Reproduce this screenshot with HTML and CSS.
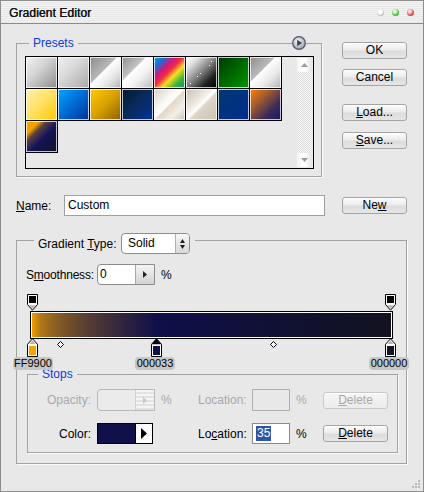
FILE: index.html
```html
<!DOCTYPE html>
<html>
<head>
<meta charset="utf-8">
<title>Gradient Editor</title>
<link rel="stylesheet" href="styles.css">
</head>
<body>
<div class="window">
  <div class="titlebar">
    <span class="title">Gradient Editor</span>
    <span class="tb-btns"><i class="dot dot-grey"></i><i class="dot dot-green"></i><i class="dot dot-red"></i></span>
  </div>
  <div class="content">
    <div class="top">
      <div class="group presets">
        <div class="group-head">
          <span class="legend">Presets</span>
          <span class="menu-btn">
            <svg width="14" height="14" viewBox="0 0 14 14">
              <defs><radialGradient id="mb" cx="40%" cy="35%" r="70%"><stop offset="0" stop-color="#f2f4f8"/><stop offset="1" stop-color="#9aa0ac"/></radialGradient></defs>
              <circle cx="7" cy="7" r="6.3" fill="url(#mb)" stroke="#4c5466" stroke-width="1.2"/>
              <path d="M5.2 3.8 10 7 5.2 10.2Z" fill="#3a4050"/>
            </svg>
          </span>
        </div>
        <div class="preset-box">
          <div class="swatches">
            <div class="sw sw1"></div><div class="sw sw2"></div><div class="sw sw3"></div><div class="sw sw4"></div>
            <div class="sw sw5"></div><div class="sw sw6"><svg width="31" height="31" viewBox="0 0 31 31"><rect x="25" y="4" width="1" height="1" fill="#fff"/><rect x="23" y="8" width="1" height="1" fill="#fff"/><rect x="14" y="16" width="1" height="1" fill="#fff"/><rect x="11" y="19" width="1" height="1" fill="#fff"/><rect x="4" y="26" width="1" height="1" fill="#fff"/></svg></div><div class="sw sw7"></div><div class="sw sw8"></div>
            <div class="sw sw9"></div><div class="sw sw10"></div><div class="sw sw11"></div><div class="sw sw12"></div>
            <div class="sw sw13"></div><div class="sw sw14"></div><div class="sw sw15"></div><div class="sw sw16"></div>
            <div class="sw sw17"></div>
          </div>
          <div class="scrollbar">
            <div class="sb-btn"><svg width="7" height="4" viewBox="0 0 7 4"><path d="M3.5 0 7 4H0Z" fill="#9a9a9a"/></svg></div>
            <div class="sb-track"></div>
            <div class="sb-btn"><svg width="7" height="4" viewBox="0 0 7 4"><path d="M0 0H7L3.5 4Z" fill="#9a9a9a"/></svg></div>
          </div>
        </div>
      </div>
      <div class="buttons">
        <div class="btn btn-ok">OK</div>
        <div class="btn btn-cancel">Cancel</div>
        <div class="btn btn-load"><u>L</u>oad...</div>
        <div class="btn btn-save"><u>S</u>ave...</div>
      </div>
    </div>

    <div class="name-row">
      <span class="name-label"><u>N</u>ame:</span>
      <div class="text-input">Custom</div>
      <div class="btn btn-new">Ne<u>w</u></div>
    </div>

    <div class="group gradient-group">
      <div class="gt-head">
        <span class="gt-label">Gradient <u>T</u>ype:</span>
        <div class="select">
          <span class="select-text">Solid</span>
          <span class="select-arrows"><svg width="5" height="10" viewBox="0 0 5 10"><path d="M2.5 0 5 4H0Z M0 6H5L2.5 10Z" fill="#222"/></svg></span>
        </div>
      </div>

      <div class="row smooth-row">
        <span class="lbl">S<u>m</u>oothness:</span>
        <div class="spin">
          <span class="spin-val">0</span>
          <span class="spin-btn"><svg width="4" height="7" viewBox="0 0 4 7"><path d="M0 0 4 3.5 0 7Z" fill="#222"/></svg></span>
        </div>
        <span class="pct">%</span>
      </div>

      <div class="grad-area">
        <div class="bar"></div>

        <svg class="stop-top stop-at-0" width="11" height="17" viewBox="0 0 11 17"><path d="M0.5 0.5H10.5V10.5L5.5 16.2 0.5 10.5Z" fill="#fff" stroke="#000"/><rect x="2" y="2" width="7" height="7" fill="#000"/><path d="M2.2 11.3H8.8L5.5 14.8Z" fill="#b4b4b4"/></svg>
        <svg class="stop-top stop-at-100" width="11" height="17" viewBox="0 0 11 17"><path d="M0.5 0.5H10.5V10.5L5.5 16.2 0.5 10.5Z" fill="#fff" stroke="#000"/><rect x="2" y="2" width="7" height="7" fill="#000"/><path d="M2.2 11.3H8.8L5.5 14.8Z" fill="#b4b4b4"/></svg>

        <svg class="stop-bot stop-at-0" width="11" height="19" viewBox="0 0 11 19"><path d="M5.5 0.8 10.5 6.3V18.5H0.5V6.3Z" fill="#fff" stroke="#000"/><path d="M5.5 2.6 8.6 6H2.4Z" fill="#b4b4b4"/><rect x="2" y="8" width="7" height="9" fill="#f6a500"/></svg>
        <svg class="stop-bot stop-at-35" width="11" height="19" viewBox="0 0 11 19"><path d="M5.5 0.8 10.5 6.3V18.5H0.5V6.3Z" fill="#fff" stroke="#000"/><path d="M5.5 0.8 10.5 6.3H0.5Z" fill="#000"/><rect x="2" y="8" width="7" height="9" fill="#10104a"/></svg>
        <svg class="stop-bot stop-at-100" width="11" height="19" viewBox="0 0 11 19"><path d="M5.5 0.8 10.5 6.3V18.5H0.5V6.3Z" fill="#fff" stroke="#000"/><path d="M5.5 2.6 8.6 6H2.4Z" fill="#b4b4b4"/><rect x="2" y="8" width="7" height="9" fill="#141422"/></svg>

        <svg class="mid mid-1" width="7" height="7" viewBox="0 0 7 7"><path d="M3.5 0.5 6.5 3.5 3.5 6.5 0.5 3.5Z" fill="#fff" stroke="#000"/></svg>
        <svg class="mid mid-2" width="7" height="7" viewBox="0 0 7 7"><path d="M3.5 0.5 6.5 3.5 3.5 6.5 0.5 3.5Z" fill="#fff" stroke="#000"/></svg>

        <span class="pill pill-0">FF9900</span>
        <span class="pill pill-35">000033</span>
        <span class="pill pill-100">000000</span>
      </div>

      <div class="group stops-group">
        <div class="group-head">
          <span class="legend">Stops</span>
        </div>
        <div class="srow srow-1 dis">
          <span class="slbl">Opacity:</span>
          <div class="spin spin-dis">
            <span class="spin-val"></span>
            <span class="spin-btn"><svg width="4" height="7" viewBox="0 0 4 7"><path d="M0 0 4 3.5 0 7Z" fill="#c8c8c8"/></svg></span>
          </div>
          <span class="spct">%</span>
          <span class="loc-lbl">Location:</span>
          <div class="loc-input loc-dis"></div>
          <span class="spct2">%</span>
          <div class="btn btn-del btn-dis"><u>D</u>elete</div>
        </div>
        <div class="srow srow-2">
          <span class="slbl">Color:</span>
          <div class="color-well">
            <span class="well-fill"></span>
            <span class="well-arrow"><svg width="6" height="11" viewBox="0 0 6 11"><path d="M0 0 6 5.5 0 11Z" fill="#000"/></svg></span>
          </div>
          <span class="spct"></span>
          <span class="loc-lbl">Lo<u>c</u>ation:</span>
          <div class="loc-input"><span class="sel">35</span></div>
          <span class="spct2">%</span>
          <div class="btn btn-del"><u>D</u>elete</div>
        </div>
      </div>
    </div>
  </div>
  <svg class="grip" width="10" height="10" viewBox="0 0 10 10">
    <rect x="8" y="2" width="2" height="2" fill="#b8b8b8"/>
    <rect x="5" y="5" width="2" height="2" fill="#b8b8b8"/><rect x="8" y="5" width="2" height="2" fill="#b8b8b8"/>
    <rect x="2" y="8" width="2" height="2" fill="#b8b8b8"/><rect x="5" y="8" width="2" height="2" fill="#b8b8b8"/><rect x="8" y="8" width="2" height="2" fill="#b8b8b8"/>
  </svg>
</div>
</body>
</html>
```

FILE: styles.css
```css
* { box-sizing: border-box; }
html, body { margin: 0; padding: 0; }
body {
  font-family: "Liberation Sans", Arial, sans-serif;
  font-size: 12px;
  color: #000;
  background: #e8e8e8;
}
u { text-decoration: underline; text-underline-offset: 1px; }

.window {
  position: relative;
  width: 424px;
  height: 492px;
  border: 1px solid #8e8e8e;
  background: #e8e8e8;
  overflow: hidden;
}

/* title bar */
.titlebar {
  height: 23px;
  border-bottom: 1px solid #8c8c8c;
  background: repeating-linear-gradient(to bottom, #f3f3f3 0 1px, #e7e7e7 1px 2px);
  display: flex;
  align-items: center;
  padding: 1px 9px 0 8px;
}
.title { font-size: 12px; color: #111; letter-spacing: 0.1px; text-shadow: 0.3px 0 0 #111; }
.tb-btns { margin-left: auto; display: flex; gap: 8px; }
.dot { display: block; width: 7px; height: 7px; border-radius: 50%; }
.dot-grey { background: radial-gradient(circle at 45% 40%, #fff 0 35%, #bbb 70%, #888); }
.dot-green { background: radial-gradient(circle at 40% 35%, #d8ffc8 0 20%, #4cc040 60%, #2a7a22); }
.dot-red { background: radial-gradient(circle at 40% 35%, #ffd8d8 0 20%, #e04848 60%, #902020); }

.content { padding-left: 15px; }

/* group boxes */
.group {
  border: 1px solid #a2a2a2;
  box-shadow: 1px 1px 0 #fafafa;
}
.group-head {
  display: flex;
  align-items: center;
  height: 14px;
  margin-top: -8px;
}
.legend {
  background: #e8e8e8;
  padding: 0 4px;
  color: #0a3cdc;
  font-size: 12px;
  line-height: 14px;
}

.top { display: flex; align-items: flex-start; }
.presets { margin-top: 19px; width: 306px; height: 134px; }
.presets .legend { margin-left: 12px; }
.menu-btn { margin-left: auto; margin-right: 15px; width: 14px; height: 14px; display: flex; }

.preset-box {
  margin: 6px 0 0 8px;
  width: 289px;
  height: 113px;
  border: 1px solid #000;
  display: flex;
}
.swatches {
  width: 256px;
  display: flex;
  flex-wrap: wrap;
  align-content: flex-start;
}
.sw {
  width: 32px;
  height: 32px;
  border-right: 1px solid #000;
  border-bottom: 1px solid #000;
  box-shadow: inset 0 0 0 1px rgba(255, 255, 255, 0.75);
}
.sw svg { display: block; }
.sw1 { background: linear-gradient(135deg, #f2f2f2 0%, #d4d4d4 40%, #8e8e8e 100%); }
.sw2 { background: linear-gradient(135deg, #eeeeee 0%, #dadada 40%, #a8a8a8 100%); }
.sw3 { background: linear-gradient(135deg, #8a8a8a 0%, #b8b8b8 43%, #ffffff 45%, #e6e6e6 70%, #b2b2b2 100%); }
.sw4 { background: linear-gradient(135deg, #909090 0%, #c2c2c2 38%, #ffffff 40%, #f2f2f2 62%, #bcbcbc 100%); }
.sw5 { background: linear-gradient(135deg, #00a8e8 0%, #1f6ed0 18%, #d0187c 35%, #f03040 48%, #f8e020 62%, #40b040 80%, #00a060 100%); }
.sw6 { background: linear-gradient(135deg, #ffffff 0%, #e2e2e2 20%, #808080 50%, #202020 75%, #000 100%); }
.sw7 { background: linear-gradient(135deg, #003800 0%, #006800 50%, #009600 100%); }
.sw8 { background: linear-gradient(135deg, #8c8c8c 0%, #bababa 40%, #ffffff 42%, #e8e8e8 68%, #b0b0b0 100%); }
.sw9 { background: linear-gradient(135deg, #fff2b0 0%, #ffe060 50%, #ffc800 100%); }
.sw10 { background: linear-gradient(135deg, #00a8ff 0%, #0070d8 45%, #00309a 100%); }
.sw11 { background: linear-gradient(135deg, #ffcc00 0%, #d8a000 50%, #8a6000 100%); }
.sw12 { background: linear-gradient(135deg, #001a2c 0%, #0a2a5a 45%, #00349c 100%); }
.sw13 { background: linear-gradient(135deg, #d8d0c0 0%, #f8f6f0 35%, #ffffff 48%, #e0d8c8 52%, #f2efe8 75%, #c8c0b0 100%); }
.sw14 { background: linear-gradient(135deg, #c8c0b0 0%, #f0ece4 40%, #ffffff 50%, #ddd6c8 56%, #c8c0b0 100%); }
.sw15 { background: linear-gradient(135deg, #003a70 0%, #003280 50%, #002c90 100%); }
.sw16 { background: linear-gradient(135deg, #ff8400 0%, #a05a30 35%, #3a2a5a 70%, #1c1a60 100%); }
.sw17 { background: linear-gradient(135deg, #f5a000 0%, #f5a000 22%, #5a4040 34%, #14145a 55%, #121222 100%); }

.scrollbar {
  margin: 1px 1px 1px 15px;
  width: 15px;
  display: flex;
  flex-direction: column;
}
.sb-btn {
  height: 14px;
  background: linear-gradient(to right, #f4f4f4, #ffffff 50%, #e4e4e4);
  display: flex;
  align-items: center;
  justify-content: center;
}
.sb-track {
  flex: 1;
  background: repeating-conic-gradient(#dcdcdc 0% 25%, #f8f8f8 0% 50%) 0 0 / 2px 2px;
}

/* buttons */
.buttons {
  display: flex;
  flex-direction: column;
  margin-left: 20px;
  width: 65px;
}
.btn {
  width: 65px;
  height: 17px;
  border: 1px solid #a4a4a4;
  border-radius: 3px;
  background: linear-gradient(#fbfbfb 0%, #ececec 45%, #dcdcdc 55%, #e6e6e6 100%);
  box-shadow: inset 0 1px 0 #fff;
  text-align: center;
  line-height: 15px;
  font-size: 12px;
}
.btn-ok { margin-top: 18px; }
.btn-cancel { margin-top: 10px; }
.btn-load { margin-top: 18px; }
.btn-save { margin-top: 11px; }

/* name row */
.name-row {
  display: flex;
  align-items: center;
  margin-top: 18px;
  height: 21px;
}
.name-label { width: 48px; }
.text-input {
  width: 261px;
  height: 21px;
  border: 1px solid #a0a0a0;
  background: #fff;
  padding-left: 3px;
  line-height: 19px;
}
.btn-new { margin-left: 17px; }

/* gradient group */
.gradient-group {
  margin-top: 24px;
  width: 391px;
  padding-bottom: 10px;
}
.gt-head {
  display: flex;
  align-items: center;
  width: fit-content;
  height: 21px;
  margin: -8px 0 0 17px;
  padding: 0 5px 0 4px;
  background: #e8e8e8;
}
.gt-label { width: 83px; }
.select {
  width: 69px;
  height: 21px;
  border: 1px solid #8c8c8c;
  border-radius: 4px;
  background: #fff;
  display: flex;
}
.select-text { flex: 1; padding-left: 6px; line-height: 19px; }
.select-arrows {
  width: 14px;
  border-left: 1px solid #b0b0b0;
  border-radius: 0 3px 3px 0;
  background: linear-gradient(#f6f6f6, #d8d8d8);
  display: flex;
  align-items: center;
  justify-content: center;
}

.row {
  display: flex;
  align-items: center;
  height: 21px;
}
.smooth-row { margin: 10px 0 0 9px; }
.lbl { width: 71px; text-align: right; padding-right: 5px; letter-spacing: -0.2px; white-space: nowrap; }
.spin {
  width: 58px;
  height: 21px;
  border: 1px solid #8c8c8c;
  border-radius: 4px 0 0 4px;
  background: #fff;
  display: flex;
}
.spin-val { flex: 1; padding-left: 2px; line-height: 19px; }
.spin-btn {
  width: 19px;
  border-left: 1px solid #a8a8a8;
  background: linear-gradient(#f4f4f4, #d2d2d2);
  display: flex;
  align-items: center;
  justify-content: center;
}
.pct { margin-left: 6px; }

/* gradient bar area */
.grad-area {
  position: relative;
  height: 80px;
  margin-top: 9px;
  padding-top: 17px;
}
.bar {
  margin-left: 13px;
  width: 363px;
  height: 28px;
  border: 1px solid #000;
  box-shadow: inset 0 0 0 1px #fff;
  background: linear-gradient(to right, #f6a500 0%, 8%, #0f0f4a 35%, #121220 100%);
}
.stop-top, .stop-bot, .mid { position: absolute; display: block; }
.stop-top { top: 0; }
.stop-bot { top: 44px; }
.stop-at-0 { left: 10px; }
.stop-at-35 { left: 134px; }
.stop-at-100 { left: 368px; }
.mid { top: 47px; }
.mid-1 { left: 40px; }
.mid-2 { left: 253px; }

.pill {
  position: absolute;
  top: 63px;
  width: 40px;
  height: 13px;
  border-radius: 4px;
  background: #c6c6c6;
  font-size: 11px;
  line-height: 13px;
  text-align: center;
}
.pill-0 { left: -4px; }
.pill-35 { left: 118px; }
.pill-100 { left: 352px; }

/* stops group */
.stops-group {
  margin: 0 8px 0 10px;
  padding-bottom: 8px;
}
.stops-group .legend { margin-left: 10px; }
.srow {
  display: grid;
  grid-template-columns: 69px 58px 43px 54px 38px 33px 66px;
  align-items: center;
}
.srow-1 { margin-top: 8px; height: 22px; }
.srow-2 { margin-top: 12px; height: 21px; }
.slbl { text-align: right; padding-right: 6px; }
.spct, .spct2 { padding-left: 6px; }
.srow-1 .spin { height: 22px; }
.dis { color: #a8a8a8; }
.spin-dis { border-color: #b8b8b8; background: #ebebeb; }
.spin-dis .spin-btn {
  border-left-color: #d0d0d0;
  background: repeating-linear-gradient(to bottom, #f4f4f4 0 2px, #e2e2e2 2px 4px);
}
.loc-input {
  height: 21px;
  border: 1px solid #8c8c8c;
  background: #fff;
  padding: 2px 0 0 3px;
  line-height: 15px;
}
.srow-1 .loc-input { height: 22px; }
.loc-dis { border-color: #b0b0b0; background: #e8e8e8; }
.sel { background: #2f55a8; color: #fff; display: inline-block; padding: 0 1px; }
.btn-dis {
  border-color: #c8c8c8;
  background: linear-gradient(#f6f6f6, #ececec);
  color: #a8a8a8;
}
.color-well {
  display: flex;
  width: 56px;
  height: 21px;
  border: 1px solid #000;
}
.well-fill { flex: 1; background: #10104a; }
.well-arrow {
  width: 17px;
  border-left: 1px solid #000;
  background: #fff;
  display: flex;
  align-items: center;
  justify-content: center;
}

.grip { position: absolute; right: 3px; bottom: 3px; }
```
